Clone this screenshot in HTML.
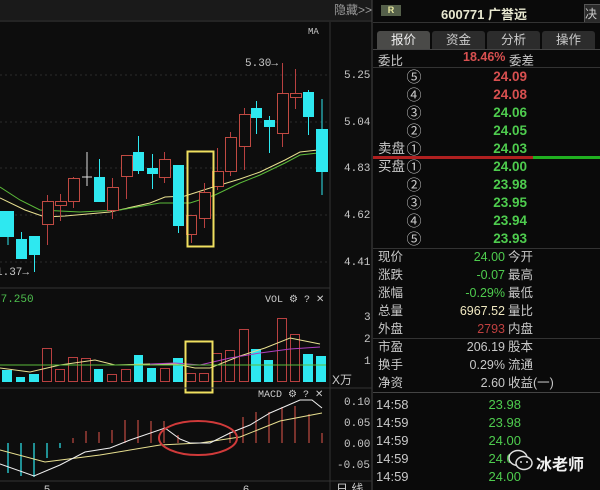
<!DOCTYPE html>
<html><head><meta charset="utf-8"><style>
*{margin:0;padding:0}
body{width:600px;height:490px;background:#0b0b0b;overflow:hidden;font-family:"Liberation Sans","Noto Sans CJK SC",sans-serif;position:relative}
svg{position:absolute;left:0;top:0}
.c{position:absolute;left:32px;width:18px;text-align:center;font-family:"Noto Sans CJK SC",sans-serif;font-size:15px;font-weight:normal;color:#c8c8c8}
.ob div{position:relative;height:18px}
.ob .l{position:absolute;left:5px;font-weight:normal}
.ob .v{position:absolute;right:0;width:100px;text-align:right}
</style></head><body>
<svg width="600" height="490" viewBox="0 0 600 490">
<rect x="0" y="0" width="372" height="490" fill="#0d0d0d"/>
<rect x="0" y="0" width="372" height="20" fill="#1a1a1a"/>
<line x1="0" y1="21" x2="372" y2="21" stroke="#3a3a3a"/>
<text x="334" y="14" fill="#9a9a9a" font-size="12" font-family="Liberation Sans,Noto Sans CJK SC,sans-serif">隐藏&gt;&gt;</text>
<line x1="330" y1="22" x2="330" y2="490" stroke="#333"/>
<line x1="372" y1="0" x2="372" y2="490" stroke="#444"/>
<g stroke="#2a2a2a" stroke-dasharray="2,3">
<line x1="0" y1="75" x2="330" y2="75"/><line x1="0" y1="122" x2="330" y2="122"/><line x1="0" y1="168" x2="330" y2="168"/><line x1="0" y1="215" x2="330" y2="215"/><line x1="0" y1="262" x2="330" y2="262"/>
</g>
<g fill="#c8c8c8" font-size="11" font-family="Liberation Mono,monospace">
<text x="344" y="78">5.25</text><text x="344" y="125">5.04</text><text x="344" y="171">4.83</text><text x="344" y="218">4.62</text><text x="344" y="265">4.41</text>
<text x="308" y="34" font-size="9">MA</text>
<text x="245" y="66" font-size="11">5.30→</text>
<text x="-4" y="275" font-size="11">1.37→</text>
</g>
<polyline fill="none" stroke="#e8e090" stroke-width="1" points="0,198 25,210 45,217 65,216 110,212 150,203 165,197 185,196 210,188 240,179 260,172 285,160 300,152 318,150"/>
<polyline fill="none" stroke="#5cbb3a" stroke-width="1" points="0,187 20,200 40,210 80,212 120,210 160,203 190,203 215,195 240,183 260,175 285,163 300,155 318,153"/>
<g stroke="#b84040" stroke-width="1">
<line x1="47.5" y1="195" x2="47.5" y2="245"/><line x1="60.5" y1="194" x2="60.5" y2="221"/><line x1="73.5" y1="177" x2="73.5" y2="208"/><line x1="112.5" y1="178" x2="112.5" y2="219"/><line x1="126.5" y1="155" x2="126.5" y2="199"/><line x1="164.5" y1="152" x2="164.5" y2="183"/><line x1="191.5" y1="215" x2="191.5" y2="243"/><line x1="204.5" y1="183" x2="204.5" y2="228"/><line x1="217.5" y1="148" x2="217.5" y2="190"/><line x1="230.5" y1="132" x2="230.5" y2="176"/><line x1="244.5" y1="108" x2="244.5" y2="170"/><line x1="282.5" y1="63" x2="282.5" y2="147"/><line x1="295.5" y1="69" x2="295.5" y2="109"/>
</g>
<g stroke="#2ee8f0" stroke-width="1">
<line x1="8" y1="211" x2="8" y2="245"/><line x1="21.5" y1="232" x2="21.5" y2="259"/><line x1="34.5" y1="236" x2="34.5" y2="272"/><line x1="99.5" y1="159" x2="99.5" y2="202"/><line x1="138.5" y1="136" x2="138.5" y2="174"/><line x1="152.5" y1="154" x2="152.5" y2="189"/><line x1="178.5" y1="165" x2="178.5" y2="233"/><line x1="256.5" y1="101" x2="256.5" y2="134"/><line x1="269.5" y1="116" x2="269.5" y2="153"/><line x1="308.5" y1="90" x2="308.5" y2="135"/><line x1="322" y1="99" x2="322" y2="195"/>
</g>
<line x1="87" y1="152" x2="87" y2="186" stroke="#ddd"/><line x1="82" y1="177" x2="92" y2="177" stroke="#ddd"/>
<g fill="#0d0d0d" stroke="#c04a42" stroke-width="1">
<rect x="42.5" y="201.5" width="11" height="23"/><rect x="55.5" y="201.5" width="11" height="4"/><rect x="68.5" y="178.5" width="11" height="23"/><rect x="107.5" y="187.5" width="11" height="23"/><rect x="121.5" y="155.5" width="11" height="21"/><rect x="159.5" y="159.5" width="11" height="18"/><rect x="186.5" y="215.5" width="10" height="19"/><rect x="199.5" y="192.5" width="11" height="26"/><rect x="212.5" y="171.5" width="11" height="15"/><rect x="225.5" y="137.5" width="11" height="34"/><rect x="239.5" y="114.5" width="11" height="32"/><rect x="277.5" y="93.5" width="11" height="40"/><rect x="290.5" y="93.5" width="11" height="4"/>
</g>
<g fill="#2ee8f0">
<rect x="0" y="211" width="14" height="26"/><rect x="16" y="239" width="11" height="20"/><rect x="29" y="236" width="11" height="19"/><rect x="94" y="177" width="11" height="25"/><rect x="133" y="152" width="11" height="19"/><rect x="147" y="168" width="11" height="6"/><rect x="173" y="165" width="11" height="61"/><rect x="251" y="108" width="11" height="10"/><rect x="264" y="120" width="11" height="7"/><rect x="303" y="92" width="11" height="25"/><rect x="316" y="129" width="12" height="43"/>
</g>
<rect x="187.5" y="151.5" width="26" height="95" fill="none" stroke="#f0e060" stroke-width="2"/>
<line x1="0" y1="288" x2="330" y2="288" stroke="#333"/>
<text x="-6" y="302" fill="#4ec04e" font-size="11" font-family="Liberation Mono,monospace">77.250</text>
<text x="265" y="302" fill="#ccc" font-size="10" font-family="Liberation Mono,monospace">VOL ⚙ ? ✕</text>
<g fill="#c8c8c8" font-size="11" font-family="Liberation Mono,monospace">
<text x="364" y="320">3</text><text x="364" y="342">2</text><text x="364" y="364">1</text>
<text x="332" y="384" font-family="Liberation Sans,Noto Sans CJK SC,sans-serif" font-size="12">X万</text>
</g>
<g fill="#2ee8f0">
<rect x="2" y="370" width="10" height="12"/><rect x="16" y="377" width="9" height="5"/><rect x="29" y="374" width="10" height="8"/><rect x="94" y="369" width="9" height="13"/><rect x="134" y="355" width="9" height="27"/><rect x="147" y="368" width="9" height="14"/><rect x="173" y="358" width="10" height="24"/><rect x="251" y="349" width="10" height="33"/><rect x="264" y="360" width="9" height="22"/><rect x="303" y="354" width="10" height="28"/><rect x="316" y="356" width="10" height="26"/>
</g>
<g fill="none" stroke="#b84040">
<rect x="42.5" y="348.5" width="9" height="33"/><rect x="55.5" y="369.5" width="9" height="12"/><rect x="68.5" y="357.5" width="9" height="24"/><rect x="81.5" y="358.5" width="9" height="23"/><rect x="107.5" y="374.5" width="9" height="7"/><rect x="121.5" y="369.5" width="9" height="12"/><rect x="160.5" y="368.5" width="9" height="13"/><rect x="186.5" y="373.5" width="9" height="8"/><rect x="199.5" y="373.5" width="9" height="8"/><rect x="212.5" y="353.5" width="9" height="28"/><rect x="225.5" y="350.5" width="9" height="31"/><rect x="239.5" y="329.5" width="9" height="52"/><rect x="277.5" y="318.5" width="9" height="63"/><rect x="290.5" y="334.5" width="9" height="47"/>
</g>
<polyline fill="none" stroke="#e8e090" points="0,368 30,372 60,365 95,360 115,365 150,364 175,364 195,368 210,368 240,356 265,348 290,338 300,340 320,344"/>
<polyline fill="none" stroke="#b040c0" points="150,364 175,363 200,365 230,358 260,353 290,349 320,347"/>
<line x1="0" y1="365" x2="326" y2="365" stroke="#5cbb3a"/>
<rect x="185.5" y="341.5" width="27" height="51" fill="none" stroke="#f0e060" stroke-width="2"/>
<line x1="0" y1="388" x2="372" y2="388" stroke="#333"/>
<text x="258" y="397" fill="#ccc" font-size="10" font-family="Liberation Mono,monospace">MACD ⚙ ? ✕</text>
<g fill="#c8c8c8" font-size="11" font-family="Liberation Mono,monospace">
<text x="344" y="405">0.10</text><text x="344" y="426">0.05</text><text x="344" y="447">0.00</text><text x="337" y="468">-0.05</text>
</g>
<g stroke="#2ee8f0" stroke-width="1.2">
<line x1="8" y1="443" x2="8" y2="473"/><line x1="21" y1="443" x2="21" y2="476"/><line x1="34" y1="443" x2="34" y2="477"/><line x1="47" y1="443" x2="47" y2="458"/><line x1="60" y1="443" x2="60" y2="448"/>
</g>
<g stroke="#c04a42" stroke-width="1.2">
<line x1="73" y1="438" x2="73" y2="443"/><line x1="86" y1="431" x2="86" y2="443"/><line x1="99" y1="432" x2="99" y2="443"/><line x1="112" y1="430" x2="112" y2="443"/><line x1="125" y1="420" x2="125" y2="443"/><line x1="138" y1="420" x2="138" y2="443"/><line x1="151" y1="421" x2="151" y2="443"/><line x1="164" y1="421" x2="164" y2="443"/><line x1="178" y1="435" x2="178" y2="443"/><line x1="230" y1="432" x2="230" y2="443"/><line x1="243" y1="417" x2="243" y2="443"/><line x1="256" y1="412" x2="256" y2="443"/><line x1="269" y1="412" x2="269" y2="443"/><line x1="282" y1="407" x2="282" y2="443"/><line x1="295" y1="406" x2="295" y2="443"/><line x1="309" y1="414" x2="309" y2="443"/><line x1="322" y1="433" x2="322" y2="443"/>
</g>
<polyline fill="none" stroke="#e8e090" points="0,450 45,462 100,455 160,445 200,443 240,437 280,421 322,413"/>
<polyline fill="none" stroke="#f0f0f0" points="0,464 34,476 60,465 85,452 110,448 130,440 165,428 180,439 190,443 210,443 230,433 250,425 270,413 300,400 312,400 322,408"/>
<ellipse cx="198" cy="438" rx="39" ry="17" fill="none" stroke="#d03a3a" stroke-width="2"/>
<line x1="0" y1="481" x2="372" y2="481" stroke="#333"/>
<text x="44" y="493" fill="#ccc" font-size="11">5</text><text x="243" y="493" fill="#ccc" font-size="11">6</text>
<text x="336" y="493" fill="#ccc" font-size="12" font-family="Liberation Sans,Noto Sans CJK SC,sans-serif">日 线</text>
</svg>

<div style="position:absolute;left:373px;top:0;width:227px;height:490px;background:#0a0a0a;font-size:12.5px;color:#c8c8c8">
  <div style="position:absolute;left:8px;top:5px;width:20px;height:11px;background:#55604a;color:#e8e8a0;font-size:9px;text-align:center;line-height:11px;font-weight:bold">R</div>
  <div style="position:absolute;left:68px;top:4px;color:#e8e8d0;font-weight:bold;font-size:13px">600771 广誉远</div>
  <div style="position:absolute;left:211px;top:4px;width:20px;height:17px;background:#2a2a2a;border:1px solid #555;color:#ccc;font-size:12px">决</div>
  <div style="position:absolute;left:0;top:22px;width:227px;height:1px;background:#333"></div>
  <div style="position:absolute;left:4px;top:31px;width:53px;height:18px;background:#4a4a48;color:#eee;text-align:center;line-height:18px;border-radius:3px 3px 0 0">报价</div>
  <div style="position:absolute;left:59px;top:31px;width:53px;height:18px;background:#2c2c2c;color:#ccc;text-align:center;line-height:18px;border-radius:3px 3px 0 0">资金</div>
  <div style="position:absolute;left:114px;top:31px;width:53px;height:18px;background:#2c2c2c;color:#ccc;text-align:center;line-height:18px;border-radius:3px 3px 0 0">分析</div>
  <div style="position:absolute;left:169px;top:31px;width:53px;height:18px;background:#2c2c2c;color:#ccc;text-align:center;line-height:18px;border-radius:3px 3px 0 0">操作</div>
  <div style="position:absolute;left:0;top:49px;width:227px;height:1px;background:#444"></div>
  <div style="position:absolute;left:5px;top:50px">委比</div>
  <div style="position:absolute;left:90px;top:50px;color:#d85050;font-weight:bold">18.46%</div>
  <div style="position:absolute;left:136px;top:50px">委差</div>
  <div style="position:absolute;left:0;top:67px;width:227px;height:1px;background:#333"></div>
  <div class="ob" style="position:absolute;left:0;top:68px;width:154px;font-weight:bold;line-height:18px;font-size:13.5px">
    <div><span class="c">⑤</span><span class="v" style="color:#d85050">24.09</span></div>
    <div><span class="c">④</span><span class="v" style="color:#d85050">24.08</span></div>
    <div><span class="c">③</span><span class="v" style="color:#4ecc4e">24.06</span></div>
    <div><span class="c">②</span><span class="v" style="color:#4ecc4e">24.05</span></div>
    <div><span class="l">卖盘</span><span class="c">①</span><span class="v" style="color:#4ecc4e">24.03</span></div>
  </div>
  <div style="position:absolute;left:0;top:156px;width:160px;height:3px;background:#b02020"></div>
  <div style="position:absolute;left:160px;top:156px;width:67px;height:3px;background:#20b020"></div>
  <div class="ob" style="position:absolute;left:0;top:158px;width:154px;font-weight:bold;line-height:18px;font-size:13.5px">
    <div><span class="l">买盘</span><span class="c">①</span><span class="v" style="color:#4ecc4e">24.00</span></div>
    <div><span class="c">②</span><span class="v" style="color:#4ecc4e">23.98</span></div>
    <div><span class="c">③</span><span class="v" style="color:#4ecc4e">23.95</span></div>
    <div><span class="c">④</span><span class="v" style="color:#4ecc4e">23.94</span></div>
    <div><span class="c">⑤</span><span class="v" style="color:#4ecc4e">23.93</span></div>
  </div>
  <div style="position:absolute;left:0;top:248px;width:227px;height:1px;background:#333"></div>
  <div style="position:absolute;left:5px;top:248px;width:220px;line-height:18px">
    <div style="display:flex"><span style="width:40px">现价</span><span style="width:87px;text-align:right;color:#4ecc4e">24.00</span><span style="margin-left:3px">今开</span></div>
    <div style="display:flex"><span style="width:40px">涨跌</span><span style="width:87px;text-align:right;color:#4ecc4e">-0.07</span><span style="margin-left:3px">最高</span></div>
    <div style="display:flex"><span style="width:40px">涨幅</span><span style="width:87px;text-align:right;color:#4ecc4e">-0.29%</span><span style="margin-left:3px">最低</span></div>
    <div style="display:flex"><span style="width:40px">总量</span><span style="width:87px;text-align:right;color:#f0e8c0">6967.52</span><span style="margin-left:3px">量比</span></div>
    <div style="display:flex"><span style="width:40px">外盘</span><span style="width:87px;text-align:right;color:#c04040">2793</span><span style="margin-left:3px">内盘</span></div>
  </div>
  <div style="position:absolute;left:0;top:338px;width:227px;height:1px;background:#333"></div>
  <div style="position:absolute;left:5px;top:338px;width:220px;line-height:18px">
    <div style="display:flex"><span style="width:40px">市盈</span><span style="width:87px;text-align:right">206.19</span><span style="margin-left:3px">股本</span></div>
    <div style="display:flex"><span style="width:40px">换手</span><span style="width:87px;text-align:right">0.29%</span><span style="margin-left:3px">流通</span></div>
    <div style="display:flex"><span style="width:40px">净资</span><span style="width:87px;text-align:right">2.60</span><span style="margin-left:3px">收益(一)</span></div>
  </div>
  <div style="position:absolute;left:0;top:392px;width:227px;height:1px;background:#444"></div>
  <div style="position:absolute;left:3px;top:396px;width:220px;line-height:18px;font-size:13px">
    <div style="display:flex"><span style="width:50px">14:58</span><span style="width:95px;text-align:right;color:#4ecc4e">23.98</span></div>
    <div style="display:flex"><span style="width:50px">14:59</span><span style="width:95px;text-align:right;color:#4ecc4e">23.98</span></div>
    <div style="display:flex"><span style="width:50px">14:59</span><span style="width:95px;text-align:right;color:#4ecc4e">24.00</span></div>
    <div style="display:flex"><span style="width:50px">14:59</span><span style="width:95px;text-align:right;color:#4ecc4e">24.00</span></div>
    <div style="display:flex"><span style="width:50px">14:59</span><span style="width:95px;text-align:right;color:#4ecc4e">24.00</span></div>
  </div>
  <svg style="left:135px;top:448px" width="26" height="24" viewBox="0 0 26 24">
    <ellipse cx="10" cy="10" rx="9" ry="7.5" fill="#0a0a0a" stroke="#ddd" stroke-width="1.5"/>
    <ellipse cx="16" cy="15" rx="8" ry="6.5" fill="#0a0a0a" stroke="#ddd" stroke-width="1.5"/>
    <circle cx="13" cy="14" r="1" fill="#ddd"/><circle cx="19" cy="14" r="1" fill="#ddd"/>
  </svg>
  <div style="position:absolute;left:163px;top:451px;color:#f2f2f2;font-weight:bold;font-size:16px">冰老师</div>
</div>
</body></html>
